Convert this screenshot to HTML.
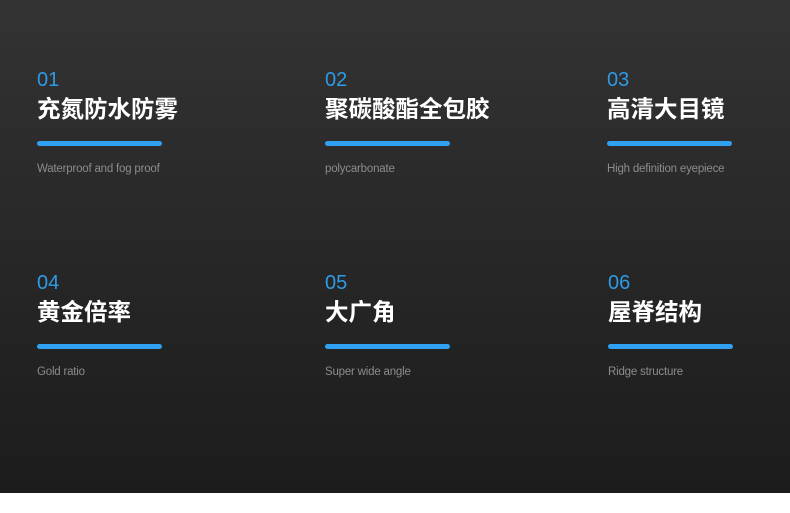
<!DOCTYPE html>
<html><head><meta charset="utf-8"><style>
body{margin:0;width:790px;height:513px;background:#fff;overflow:hidden}
.bg{position:absolute;left:0;top:0;width:790px;height:493px;background:linear-gradient(#333333,#1c1c1c);}
.it{position:absolute;font-family:"Liberation Sans","Noto Sans CJK SC",sans-serif}
.n{position:absolute;top:0;left:0;font-size:20px;color:#2f9ae6;font-weight:300;line-height:20px;white-space:nowrap}
.t{position:absolute;top:26px;left:0;font-size:23.5px;font-weight:bold;color:#fff;line-height:26px;white-space:nowrap}
.b{position:absolute;top:71px;left:0;width:125px;height:5px;border-radius:3px;background:#2fa0f2}
.s{position:absolute;top:93px;left:0;font-size:11.5px;color:#8c8c8c;letter-spacing:-0.2px;white-space:nowrap}
</style></head><body><div class="bg"></div>
<div class="it" style="left:37px;top:70px"><div class="n">01</div><div class="t">充氮防水防雾</div><div class="b"></div><div class="s">Waterproof and fog proof</div></div>
<div class="it" style="left:325px;top:70px"><div class="n">02</div><div class="t">聚碳酸酯全包胶</div><div class="b"></div><div class="s">polycarbonate</div></div>
<div class="it" style="left:607px;top:70px"><div class="n">03</div><div class="t">高清大目镜</div><div class="b"></div><div class="s">High definition eyepiece</div></div>
<div class="it" style="left:37px;top:273px"><div class="n">04</div><div class="t">黄金倍率</div><div class="b"></div><div class="s">Gold ratio</div></div>
<div class="it" style="left:325px;top:273px"><div class="n">05</div><div class="t">大广角</div><div class="b"></div><div class="s">Super wide angle</div></div>
<div class="it" style="left:608px;top:273px"><div class="n">06</div><div class="t">屋脊结构</div><div class="b"></div><div class="s">Ridge structure</div></div>
</body></html>
